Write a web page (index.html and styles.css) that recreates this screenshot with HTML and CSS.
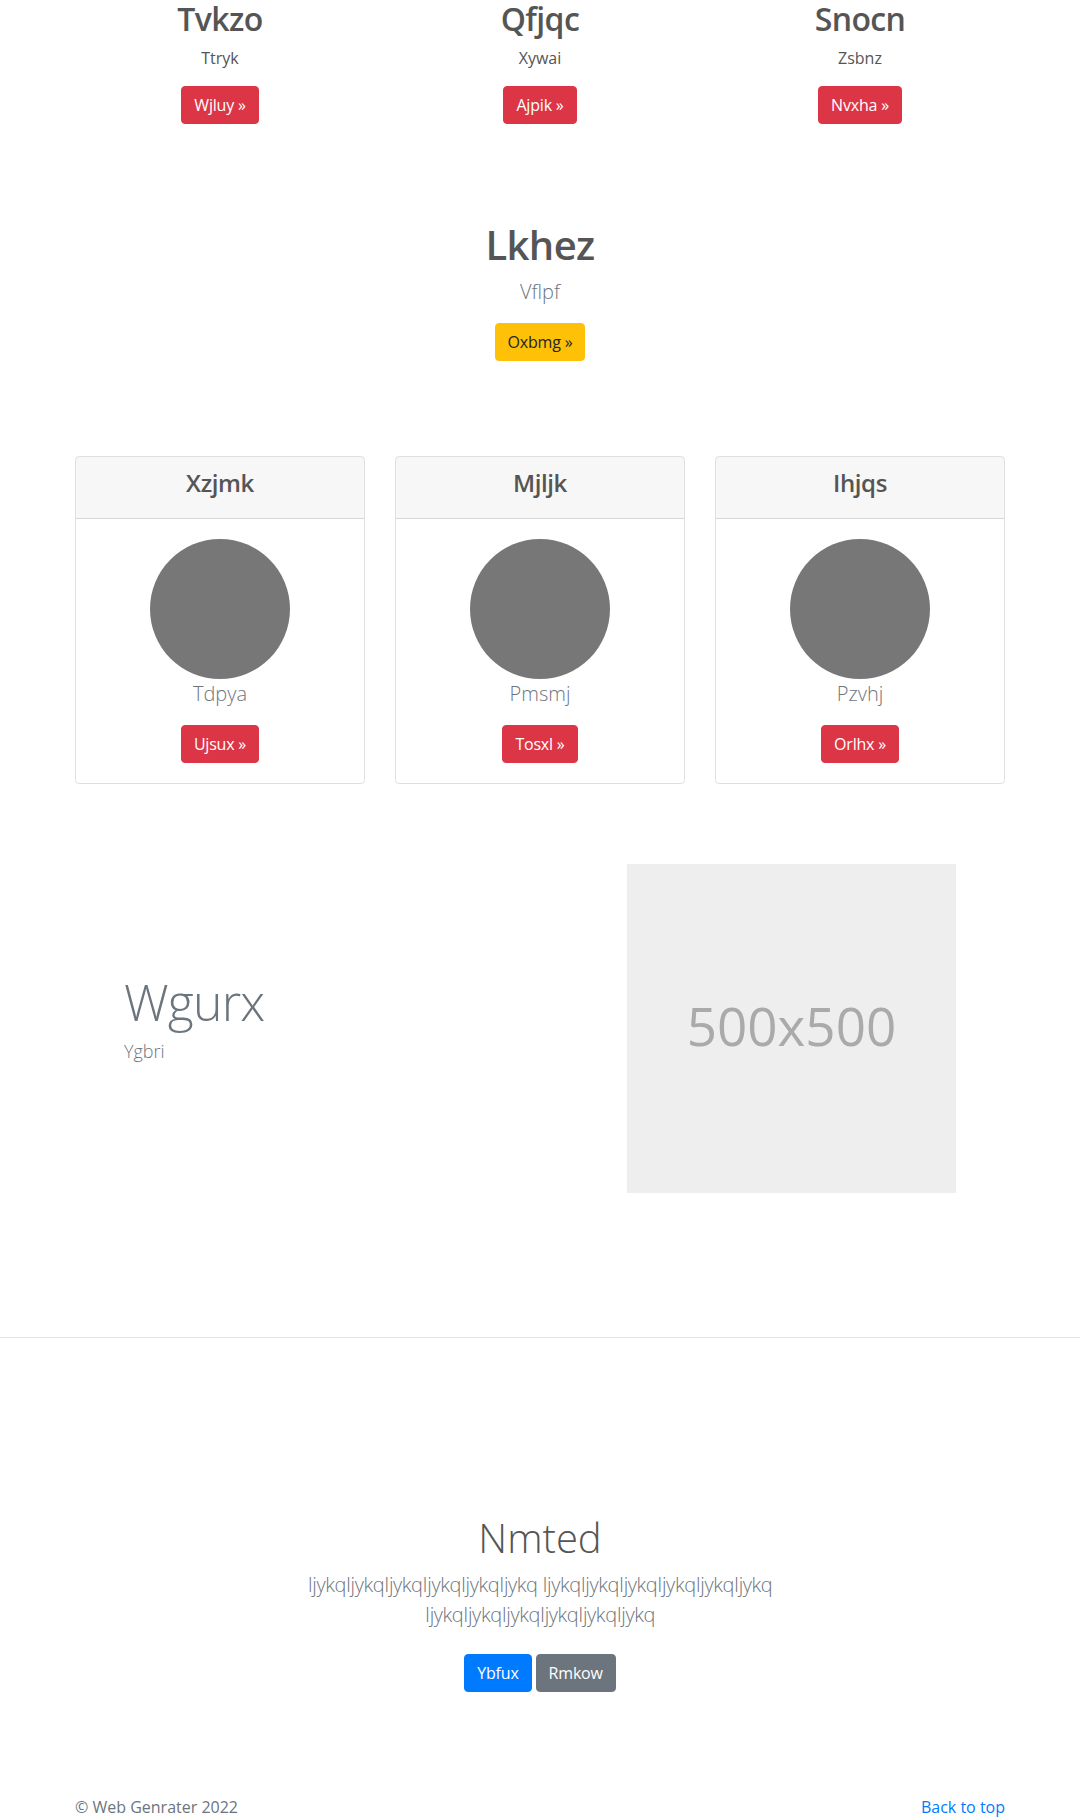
FILE: index.html
```html
<!DOCTYPE html>
<html lang="en">
<head>
<meta charset="utf-8">
<title>Page</title>
<link rel="stylesheet" href="styles.css">
</head>
<body>
<div class="container">
  <section class="trio">
    <div class="trio-item">
      <h2>Tvkzo</h2>
      <p>Ttryk</p>
      <a class="btn btn-danger" href="#">Wjluy &raquo;</a>
    </div>
    <div class="trio-item">
      <h2>Qfjqc</h2>
      <p>Xywai</p>
      <a class="btn btn-danger" href="#">Ajpik &raquo;</a>
    </div>
    <div class="trio-item">
      <h2>Snocn</h2>
      <p>Zsbnz</p>
      <a class="btn btn-danger" href="#">Nvxha &raquo;</a>
    </div>
  </section>

  <section class="spotlight">
    <h1>Lkhez</h1>
    <p class="lead">Vflpf</p>
    <a class="btn btn-warning" href="#">Oxbmg &raquo;</a>
  </section>

  <section class="cards">
    <div class="card">
      <div class="card-header"><h4>Xzjmk</h4></div>
      <div class="card-body">
        <div class="avatar"></div>
        <p class="lead">Tdpya</p>
        <a class="btn btn-danger" href="#">Ujsux &raquo;</a>
      </div>
    </div>
    <div class="card">
      <div class="card-header"><h4>Mjljk</h4></div>
      <div class="card-body">
        <div class="avatar"></div>
        <p class="lead">Pmsmj</p>
        <a class="btn btn-danger" href="#">Tosxl &raquo;</a>
      </div>
    </div>
    <div class="card">
      <div class="card-header"><h4>Ihjqs</h4></div>
      <div class="card-body">
        <div class="avatar"></div>
        <p class="lead">Pzvhj</p>
        <a class="btn btn-danger" href="#">Orlhx &raquo;</a>
      </div>
    </div>
  </section>

  <section class="featurette">
    <div class="featurette-text">
      <h2>Wgurx</h2>
      <p>Ygbri</p>
    </div>
    <div class="placeholder">500x500</div>
  </section>
</div>

<hr class="divider">

<section class="album-hero">
  <div class="container">
    <h1>Nmted</h1>
    <p class="lead">IjykqIjykqIjykqIjykqIjykqIjykq IjykqIjykqIjykqIjykqIjykqIjykq IjykqIjykqIjykqIjykqIjykqIjykq</p>
    <p class="actions">
      <a class="btn btn-primary" href="#">Ybfux</a>
      <a class="btn btn-secondary" href="#">Rmkow</a>
    </p>
  </div>
</section>

<footer class="footer">
  <div class="container footer-inner">
    <p>&copy; Web Genrater 2022</p>
    <a class="back-top" href="#">Back to top</a>
  </div>
</footer>
</body>
</html>
```

FILE: styles.css
```css
* { box-sizing: border-box; }

body {
  margin: 0;
  font-family: "Open Sans", "Noto Sans", "DejaVu Sans", sans-serif;
  font-size: 16px;
  line-height: 1.5;
  color: #555;
  background: #fff;
}

.container {
  width: 960px;
  margin: 0 auto;
  padding: 0 15px;
}

.btn {
  display: inline-block;
  padding: 6px 12px;
  font-size: 16px;
  line-height: 1.5;
  border: 1px solid transparent;
  border-radius: 4px;
  text-decoration: none;
  color: #fff;
  font-weight: 400;
  letter-spacing: -0.2px;
}
.btn-danger { background: #dc3545; border-color: #dc3545; }
.btn-warning { background: #ffc107; border-color: #ffc107; color: #212529; }
.btn-primary { background: #007bff; border-color: #007bff; }
.btn-secondary { background: #6c757d; border-color: #6c757d; }

.lead {
  font-size: 20px;
  font-weight: 300;
  line-height: 1.5;
  color: #6c757d;
  margin: 0 0 16px;
}

/* three teasers */
.trio {
  display: grid;
  grid-template-columns: repeat(3, 1fr);
  gap: 30px;
  text-align: center;
}
.trio h2 {
  font-size: 32px;
  line-height: 1.2;
  font-weight: 600;
  letter-spacing: -0.6px;
  margin: 0 0 8px;
}
.trio p { margin: 0 0 16px; }

/* spotlight */
.spotlight {
  margin-top: 97px;
  text-align: center;
}
.spotlight h1 {
  font-size: 40px;
  line-height: 1.2;
  font-weight: 600;
  letter-spacing: -0.6px;
  margin: 0 0 8px;
}

/* cards */
.cards {
  margin-top: 95px;
  display: grid;
  grid-template-columns: repeat(3, 1fr);
  gap: 30px;
}
.card {
  border: 1px solid rgba(0, 0, 0, .125);
  border-radius: 4px;
  text-align: center;
  overflow: hidden;
}
.card-header {
  padding: 12px 20px;
  background: rgba(0, 0, 0, .03);
  border-bottom: 1px solid rgba(0, 0, 0, .125);
}
.card-header h4 {
  margin: 0 0 8px;
  font-size: 24px;
  line-height: 1.2;
  font-weight: 600;
  letter-spacing: -0.4px;
}
.card-body { padding: 20px; }
.avatar {
  width: 140px;
  height: 140px;
  border-radius: 50%;
  background: #777;
  margin: 0 auto;
}

/* featurette */
.featurette {
  margin-top: 80px;
  display: flex;
  align-items: center;
  justify-content: space-between;
  padding: 0 49px;
}
.featurette-text h2 {
  font-size: 50px;
  line-height: 1;
  font-weight: 300;
  letter-spacing: -0.8px;
  color: #6c757d;
  margin: 0 0 12px;
}
.featurette-text p {
  margin: 0 0 16px;
  font-size: 18px;
  line-height: 1.4;
  font-weight: 300;
  color: #6c757d;
}
.placeholder {
  width: 329px;
  height: 329px;
  background: #eee;
  color: #aaa;
  font-size: 53px;
  padding-bottom: 6px;
  display: flex;
  align-items: center;
  justify-content: center;
}

.divider {
  margin: 144px 0 0;
  border: 0;
  border-top: 1px solid rgba(0, 0, 0, .1);
}

/* album hero */
.album-hero {
  padding-top: 176px;
  text-align: center;
}
.album-hero h1 {
  font-size: 40px;
  line-height: 1.2;
  font-weight: 300;
  margin: 0 0 8px;
}
.album-hero .lead {
  max-width: 610px;
  margin: 0 auto 16px;
  letter-spacing: -0.4px;
}
.actions {
  margin: 0;
  padding: 8px 0;
  display: flex;
  justify-content: center;
  gap: 4px;
}

/* footer */
.footer {
  padding-top: 95px;
  padding-bottom: 48px;
  color: #6c757d;
}
.footer-inner {
  display: flex;
  justify-content: space-between;
}
.footer-inner p { margin: 0; }
.back-top { color: #007bff; text-decoration: none; }
```
